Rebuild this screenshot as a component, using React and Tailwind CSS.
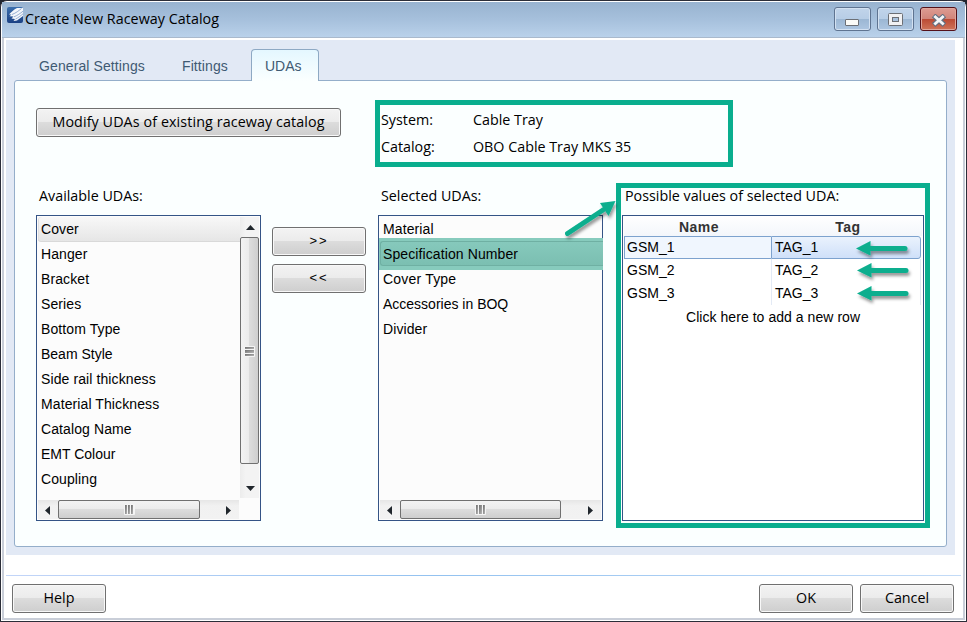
import React from 'react';

const UI = "font-['Open_Sans','Noto_Sans',sans-serif] text-[14.3px] leading-5 whitespace-nowrap";
const SANS = "font-['Liberation_Sans',Arial,sans-serif] text-[14px] whitespace-nowrap";
const FACE = 'bg-[linear-gradient(180deg,#f3f3f3_0%,#ebebeb_49%,#dcdcdc_50%,#cecece_100%)]';

function Button({ className = '', children }) {
  return (
    <button
      className={`flex h-[29px] shrink-0 items-center justify-center rounded-[3px] border border-[#707070] text-black shadow-[inset_0_0_0_1px_#f8f8f8] ${FACE} ${className}`}
    >
      {children}
    </button>
  );
}

function Triangle({ points, w, h }) {
  return (
    <svg width={w} height={h} viewBox={`0 0 ${w} ${h}`} className="block shrink-0">
      <polygon points={points} fill="#20262c" />
    </svg>
  );
}

function HScroll({ className, thumb }) {
  return (
    <div className={`flex h-[19px] shrink-0 items-center bg-[linear-gradient(180deg,#e6e6e6,#f1f1f1_30%,#f2f2f2)] ${className}`}>
      <div className="flex w-5 shrink-0 pl-[7px] pt-[2px]">
        <Triangle w={5} h={9} points="5,0 5,9 0,4.5" />
      </div>
      <div className={`flex h-[19px] shrink-0 items-center justify-center rounded-[2px] border border-[#707070] ${FACE} ${thumb}`}>
        <div className="flex h-[11px] w-[11px] items-center gap-px rounded-[1px] bg-[#f4f4f4] px-px">
          {[0, 1, 2].map((i) => (
            <span key={i} className="h-[9px] flex-1 bg-gradient-to-br from-[#6f6f6f] to-[#b8b8b8]" />
          ))}
        </div>
      </div>
      <div className="flex flex-1 justify-end pr-2 pt-[2px]">
        <Triangle w={5} h={9} points="0,0 5,4.5 0,9" />
      </div>
    </div>
  );
}

function VScroll() {
  return (
    <div className="flex h-[281px] w-[19px] shrink-0 flex-col items-center bg-[linear-gradient(90deg,#ececec,#f3f3f3_30%)]">
      <div className="flex h-5 shrink-0 items-center pl-[2px]">
        <Triangle w={9} h={5} points="0,5 4.5,0 9,5" />
      </div>
      <div className="flex h-[227px] w-[19px] shrink-0 flex-col items-center justify-center rounded-[2px] border border-[#707070] bg-[linear-gradient(90deg,#f3f3f3_0%,#ebebeb_49%,#dcdcdc_50%,#cecece_100%)] pt-[2px]">
        <div className="flex h-[11px] w-[11px] flex-col gap-px rounded-[1px] bg-[#f4f4f4] p-px">
          {[0, 1, 2].map((i) => (
            <span key={i} className="w-[9px] flex-1 bg-gradient-to-br from-[#6f6f6f] to-[#b8b8b8]" />
          ))}
        </div>
      </div>
      <div className="flex flex-1 items-center pl-[2px] pt-[14px]">
        <Triangle w={9} h={5} points="0,0 9,0 4.5,5" />
      </div>
    </div>
  );
}

const available = [
  ['Cover', 'tracking-[0.1px]'],
  ['Hanger', 'tracking-[0.1px]'],
  ['Bracket', 'tracking-[0.1px]'],
  ['Series', 'tracking-[0.1px]'],
  ['Bottom Type', 'tracking-[0.1px]'],
  ['Beam Style', 'tracking-[0px]'],
  ['Side rail thickness', 'tracking-[0.1px]'],
  ['Material Thickness', 'tracking-[0.1px]'],
  ['Catalog Name', 'tracking-[0.1px]'],
  ['EMT Colour', 'tracking-[0px]'],
  ['Coupling', 'tracking-[0.1px]'],
];

const selected = [
  ['Material', 'tracking-[0.1px]'],
  ['Specification Number', 'tracking-[0.1px]'],
  ['Cover Type', 'tracking-[0.2px]'],
  ['Accessories in BOQ', 'tracking-[0px]'],
  ['Divider', 'tracking-[0.1px]'],
];

const values = [
  ['GSM_1', 'TAG_1'],
  ['GSM_2', 'TAG_2'],
  ['GSM_3', 'TAG_3'],
];

function TitleBar() {
  return (
    <header className="flex h-9 shrink-0 items-start border-b border-[#a9b9cc] bg-[linear-gradient(180deg,#98b3d0_0%,#a6c0dc_50%,#b9d1ea_100%)] pl-[5px] pr-[8px] pt-[5px]">
      <svg width="16" height="16" viewBox="0 0 16 16" className="shrink-0">
        <defs>
          <linearGradient id="logo" x1="0" y1="0" x2="0" y2="1">
            <stop offset="0" stopColor="#3b6fae" />
            <stop offset="1" stopColor="#1b4184" />
          </linearGradient>
        </defs>
        <rect width="16" height="16" rx="2" fill="url(#logo)" />
        <path d="M2 7.500C4 5 7 2.500 10 1H16V9L10 13.500L6.500 14L8 12L4.500 11.500L6.500 9.500L2.500 9.300L4.500 7.500Z" fill="#f4f7fb" />
        <path d="M5 7.500C9 6 12 3.500 14.500 1.500M7 9.800C10.500 8.500 13 6.500 16 4.200M8.500 12C11.500 10.500 14 8.500 16 6.800" stroke="#6f8fbe" strokeWidth=".7" fill="none" />
      </svg>
      <h1 className={`${UI} ml-[2px] mt-[2px] flex-1 tracking-[0.05px] text-black`}>Create New Raceway Catalog</h1>
      <div className="flex gap-[6px]">
        <div className="flex h-6 w-[37px] justify-center rounded-[3px] border border-[#5f7491] bg-[linear-gradient(180deg,#c1d4ea_0%,#b7cde6_49%,#9bb6d3_50%,#adc6e1_100%)] pt-[11px] shadow-[inset_0_0_0_1px_#d3e1f1]">
          <span className="mr-px h-[7px] w-[14px] rounded-[1px] border border-[#6c6f75] bg-[#fbfbf8]" />
        </div>
        <div className="flex h-6 w-[37px] justify-center rounded-[3px] border border-[#5f7491] bg-[linear-gradient(180deg,#c1d4ea_0%,#b7cde6_49%,#9bb6d3_50%,#adc6e1_100%)] pt-[5px] shadow-[inset_0_0_0_1px_#d3e1f1]">
          <svg width="15" height="13" viewBox="0 0 15 13">
            <rect x=".5" y=".5" width="14" height="12" rx="1" fill="#f1f1f3" stroke="#6c6f75" />
            <rect x="4.500" y="4.500" width="6" height="4" fill="#a9c2de" stroke="#6c6f75" />
          </svg>
        </div>
        <div className="flex h-6 w-[37px] justify-center rounded-[3px] border border-[#541119] bg-[linear-gradient(180deg,#dd9b92_0%,#d1857a_49%,#bb4a34_50%,#cf7459_100%)] pt-[6px] shadow-[inset_0_0_0_1px_#dfa69c]">
          <svg width="14" height="13" viewBox="0 0 14 13">
            <path d="M3.500 3.200L10.500 9.300M10.500 3.200L3.500 9.300" stroke="#626f80" strokeWidth="5.200" strokeLinecap="square" />
            <path d="M3.400 3L10.600 9.500M10.600 3L3.400 9.500" stroke="#f5f6f7" strokeWidth="2.900" strokeLinecap="square" />
          </svg>
        </div>
      </div>
    </header>
  );
}

function Tabs() {
  return (
    <nav className={`${SANS} relative z-10 -mb-px flex h-8 shrink-0 items-start pl-[33px] text-[#3f5a73]`}>
      <span className="mt-[9px] w-[143px] leading-4 tracking-[0.1px]">General Settings</span>
      <span className="mt-[9px] w-[69px] leading-4 tracking-[0.1px]">Fittings</span>
      <span className="h-8 w-[68px] rounded-t-[4px] border border-b-0 border-[#8ea9c4] bg-gradient-to-b from-[#e4f7ff] to-[#fbffff] pl-[13px] pt-2 leading-4">
        UDAs
      </span>
    </nav>
  );
}

function ArrowLayer() {
  return (
    <svg width="967" height="622" viewBox="0 0 967 622" className="pointer-events-none absolute left-0 top-0 z-20">
      <defs>
        <filter id="soft" x="-20%" y="-50%" width="150%" height="250%">
          <feDropShadow dx="1.500" dy="3" stdDeviation="1.500" floodColor="#000" floodOpacity=".4" />
        </filter>
      </defs>
      <g fill="#09ae8e" stroke="#09ae8e" filter="url(#soft)">
        <path d="M567.500 233.500L603 210" strokeWidth="5" strokeLinecap="round" />
        <path d="M615.500 201L600 203L608.500 216Z" stroke="none" />
        {[[856, 248.5], [857, 270.5], [857, 293.5]].map(([x, y]) => (
          <g key={y} transform={`translate(${x} ${y})`}>
            <path d="M12 0H49" strokeWidth="5" strokeLinecap="round" />
            <path d="M0 0L14.500-7.500V7Z" stroke="none" />
          </g>
        ))}
      </g>
    </svg>
  );
}

export default function App() {
  return (
    <div className="relative h-[622px] w-[967px] overflow-hidden bg-[#20242e]">
      <div className="flex h-full flex-col rounded-t-[7px] border border-[#2b2d38] bg-white p-px">
        <TitleBar />
        <div className="flex min-h-0 flex-1 flex-col border-2 border-t-0 border-[#c9ced8] bg-white">
          <main className="ml-[2px] mt-[2px] flex h-[515px] w-[949px] shrink-0 flex-col bg-[#e2e9f5] pt-[9px]">
            <Tabs />
            <section className="ml-2 h-[467px] w-[933px] rounded-[3px] border border-[#94aeca] bg-[#fbffff] pl-[21px] pt-[19px]">
              <div className="flex h-[67px] items-start">
                <Button className={`${UI} mt-2 w-[305px] pb-px`}>
                  <span className="tracking-[0.1px]">Modify UDAs of existing raceway catalog</span>
                </Button>
                <dl className={`${UI} ml-[34px] grid h-[67px] w-[358px] grid-cols-[92px_1fr] content-start gap-y-[7px] border-[5px] border-[#09ae8e] pl-px pt-[5px] text-black`}>
                  <dt>System:</dt>
                  <dd>Cable Tray</dd>
                  <dt>Catalog:</dt>
                  <dd>OBO Cable Tray MKS 35</dd>
                </dl>
              </div>

              <div className="mt-4 flex h-[345px]">
                <div className="w-[225px] shrink-0">
                  <h2 className={`${UI} h-8 pl-[3px] pt-[3px]`}>Available UDAs:</h2>
                  <div className="flex h-[306px] flex-col justify-between border border-[#345486] bg-[#fcfcfc] p-px">
                    <div className="flex">
                      <ul className={`${SANS} h-[281px] w-[202px] shrink-0 leading-[25px] text-black`}>
                        {available.map(([name, fit], i) => (
                          <li
                            key={name}
                            className={`h-[25px] pl-[3px] ${fit} ${i === 0 ? 'rounded-l-[3px] border-b border-[#d9d9d9] bg-gradient-to-b from-[#f8f8f8] to-[#e6e6e6] shadow-[inset_1px_0_0_#e0e0e0]' : ''}`}
                          >
                            {name}
                          </li>
                        ))}
                      </ul>
                      <VScroll />
                    </div>
                    <HScroll className="w-[201px]" thumb="w-[142px]" />
                  </div>
                </div>

                <div className={`${SANS} ml-[11px] flex w-[94px] flex-col gap-2 pt-11`}>
                  <Button className="pb-px text-[13px] tracking-[2px]">&gt;&gt;</Button>
                  <Button className="pb-px text-[13px] tracking-[2px]">&lt;&lt;</Button>
                </div>

                <div className="ml-3 w-[225px] shrink-0">
                  <h2 className={`${UI} h-8 pl-[3px] pt-[3px]`}>Selected UDAs:</h2>
                  <div className="flex h-[306px] flex-col justify-between border border-[#345486] bg-[#fcfcfc] p-px">
                    <ul className={`${SANS} leading-[25px] text-black`}>
                      {selected.map(([name, fit], i) =>
                        i === 1 ? (
                          <li key={name} className={`relative -mb-[3px] -ml-px -mr-[2px] -mt-1 h-8 py-[3px] pl-px ${fit} bg-[#87cbbd]`}>
                            <div className="h-[25px] rounded-l-[3px] border border-r-0 border-[#6fb0a3] bg-gradient-to-b from-[#86c9bc] to-[#7bbfb1] pl-[2px] leading-[25px]">
                              {name}
                            </div>
                          </li>
                        ) : (
                          <li key={name} className={`h-[25px] pl-[3px] ${fit}`}>{name}</li>
                        ),
                      )}
                    </ul>
                    <HScroll className="w-[221px]" thumb="w-[161px]" />
                  </div>
                </div>

                <div className="ml-[13px] h-[345px] w-[314px] shrink-0 border-[5px] border-[#09ae8e] pl-px">
                  <h2 className={`${UI} h-[27px]`}>
                    <span className="-mt-[2px] block pl-[3px]">Possible values of selected UDA:</span>
                  </h2>
                  <div className={`${SANS} mt-[2px] h-[306px] w-[302px] border border-[#345486] bg-white px-px`}>
                    <div className="grid h-5 grid-cols-[150px_1fr] bg-gradient-to-b from-white to-[#f3f6fb] text-center font-bold leading-[23px] tracking-[0.5px] text-[#333]">
                      <span>Name</span>
                      <span>Tag</span>
                    </div>
                    {values.map(([name, tag], i) => (
                      <div key={name} className="grid h-[23px] grid-cols-[147px_1fr] leading-[23px]">
                        <span className={i === 0 ? 'border border-r-0 border-[#7da2ce] bg-[#f0f6fe] pl-[2px] leading-[21px]' : 'pl-[3px]'}>{name}</span>
                        <span
                          className={
                            i === 0
                              ? 'rounded-r-[3px] border border-[#7da2ce] bg-gradient-to-b from-[#eaf2fd] to-[#cfe0f9] pl-[3px] leading-[21px] mr-px'
                              : 'mr-px border-x border-[#e3eaf5] pl-[3px]'
                          }
                        >
                          {tag}
                        </span>
                      </div>
                    ))}
                    <div className="h-6 pl-[62px] leading-[25px] tracking-[0.05px]">Click here to add a new row</div>
                  </div>
                </div>
              </div>
            </section>
          </main>
          <div className="ml-[2px] mr-[2px] mt-5 h-px shrink-0 bg-[linear-gradient(90deg,#c3d5f8,#93c2f0_45%,#c3dbf7)]" />
          <footer className={`${UI} mt-2 flex items-start gap-[7px] pl-2 pr-[9px]`}>
            <Button className="w-[94px] pb-px">Help</Button>
            <div className="flex-1" />
            <Button className="w-[94px] pb-px">OK</Button>
            <Button className="w-[94px] pb-px">Cancel</Button>
          </footer>
        </div>
      </div>
      <ArrowLayer />
    </div>
  );
}
